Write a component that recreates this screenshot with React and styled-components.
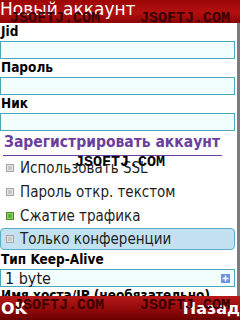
import React from "react";
import styled, { createGlobalStyle } from "styled-components";

const GlobalStyle = createGlobalStyle`
  html, body {
    margin: 0;
    padding: 0;
    background: #ffffff;
  }
  * {
    box-sizing: border-box;
  }
`;

const Screen = styled.div`
  position: relative;
  width: 240px;
  height: 320px;
  display: flex;
  flex-direction: column;
  overflow: hidden;
  font-family: "DejaVu Sans Condensed", "DejaVu Sans", sans-serif;
  color: #000;
  background: #fff;
`;

const TitleBar = styled.div`
  height: 23px;
  flex: none;
  background: linear-gradient(#9c0606, #b41010 55%, #8a0404);
  color: #fff;
  font-family: "DejaVu Sans", sans-serif;
  font-size: 17px;
  line-height: 19px;
  white-space: nowrap;
`;

const Body = styled.div`
  flex: 1;
  display: flex;
  min-height: 0;
  overflow: hidden;
`;

const Content = styled.div`
  flex: 1;
  min-width: 0;
  padding-right: 1px;
`;

const ScrollTrack = styled.div`
  width: 4px;
  flex: none;
  background: #d8d8d8;
  border-left: 1px solid #ffffff;
  display: flex;
  flex-direction: column;
`;

const ScrollThumb = styled.div`
  flex: 1;
  background: #7c7c7c;
`;

const Label = styled.div`
  height: 18px;
  line-height: 17px;
  font-size: 13.5px;
  font-weight: bold;
  padding-left: 1px;
  white-space: nowrap;
`;

const Field = styled.div`
  height: 18px;
  border: 1px solid #4aa7b7;
  background: #f3ffff;
  display: flex;
  align-items: center;
  padding: 0 3px 0 4px;
  font-size: 16px;
  color: #1a1a1a;
  justify-content: space-between;
`;

const LinkRow = styled.div`
  height: 25px;
  padding: 1px 0 0 3px;
`;

const Link = styled.span`
  display: inline-block;
  color: #6a3f9e;
  font-size: 15.5px;
  font-weight: bold;
  line-height: 17px;
  padding: 0 2px 4px 1px;
  border-bottom: 1px solid #6a3f9e;
  white-space: nowrap;
`;

const CheckRow = styled.div`
  height: ${(p) => (p.$selected ? "22px" : "24px")};
  margin: ${(p) => (p.$selected ? "0 0 1px" : "0")};
  display: flex;
  align-items: center;
  gap: 6px;
  padding-left: ${(p) => (p.$selected ? "5px" : "6px")};
  font-size: 15px;
  color: #1e1e1e;
  white-space: nowrap;
  background: ${(p) => (p.$selected ? "#c2e1f1" : "transparent")};
  border: ${(p) => (p.$selected ? "1px solid #58aec6" : "none")};
  border-radius: ${(p) => (p.$selected ? "4px" : "0")};
`;

const Box = styled.span`
  width: 8px;
  height: 8px;
  flex: none;
  border: 1px solid ${(p) => (p.$checked ? "#4d8a2e" : "#a6a6a6")};
  background: ${(p) => (p.$checked ? "#62b23c" : "#c6c6c6")};
  box-shadow: inset 0 0 0 1px ${(p) => (p.$checked ? "#8fcf6a" : "#e2e2e2")};
`;

const PlusIcon = styled.span`
  width: 9px;
  height: 9px;
  background: #7191e3;
  display: flex;
  align-items: center;
  justify-content: center;
  margin-right: 1px;
`;

const SoftBar = styled.div`
  height: 24px;
  flex: none;
  background: linear-gradient(#b81a1a, #8e0808 60%, #6a0000);
  display: flex;
  align-items: center;
  justify-content: space-between;
  color: #fff;
  font-family: "DejaVu Sans", sans-serif;
  font-size: 16px;
  font-weight: bold;
  padding: 0 0 0 1px;
  position: relative;
  z-index: 1;
`;

const Watermark = styled.div`
  position: absolute;
  left: ${(p) => p.$x}px;
  top: ${(p) => p.$y}px;
  font-family: "Liberation Mono", "DejaVu Sans Mono", monospace;
  font-size: 15px;
  font-weight: bold;
  line-height: 15px;
  color: ${(p) => p.$color};
  white-space: nowrap;
  pointer-events: none;
  z-index: 2;
`;

const options = [
  { text: "Использовать SSL" },
  { text: "Пароль откр. текстом" },
  { text: "Сжатие трафика", checked: true },
  { text: "Только конференции", selected: true },
];

const marks = [
  { x: 10, y: 11, color: "#3a0000" },
  { x: 140, y: 11, color: "#3a0000" },
  { x: 75, y: 155, color: "#000" },
  { x: 14, y: 298, color: "#3a0000" },
  { x: 140, y: 298, color: "#3a0000" },
];

export default function App() {
  return (
    <Screen>
      <GlobalStyle />
      <TitleBar>Новый аккаунт</TitleBar>
      <Body>
        <Content>
          <Label>Jid</Label>
          <Field />
          <Label>Пароль</Label>
          <Field />
          <Label>Ник</Label>
          <Field />
          <LinkRow>
            <Link>Зарегистрировать аккаунт</Link>
          </LinkRow>
          {options.map((o) => (
            <CheckRow key={o.text} $selected={o.selected}>
              <Box $checked={o.checked} />
              {o.text}
            </CheckRow>
          ))}
          <Label>Тип Keep-Alive</Label>
          <Field>
            1 byte
            <PlusIcon>
              <svg width="7" height="7" viewBox="0 0 7 7">
                <path d="M3.5 0.5v6M0.5 3.5h6" stroke="#fff" strokeWidth="1.4" />
              </svg>
            </PlusIcon>
          </Field>
          <Label>Имя хоста/IP (необязательно)</Label>
        </Content>
        <ScrollTrack>
          <ScrollThumb />
        </ScrollTrack>
      </Body>
      <SoftBar>
        <span>OK</span>
        <span>Назад</span>
      </SoftBar>
      {marks.map((m, i) => (
        <Watermark key={i} $x={m.x} $y={m.y} $color={m.color}>
          JSOFTJ.COM
        </Watermark>
      ))}
    </Screen>
  );
}
